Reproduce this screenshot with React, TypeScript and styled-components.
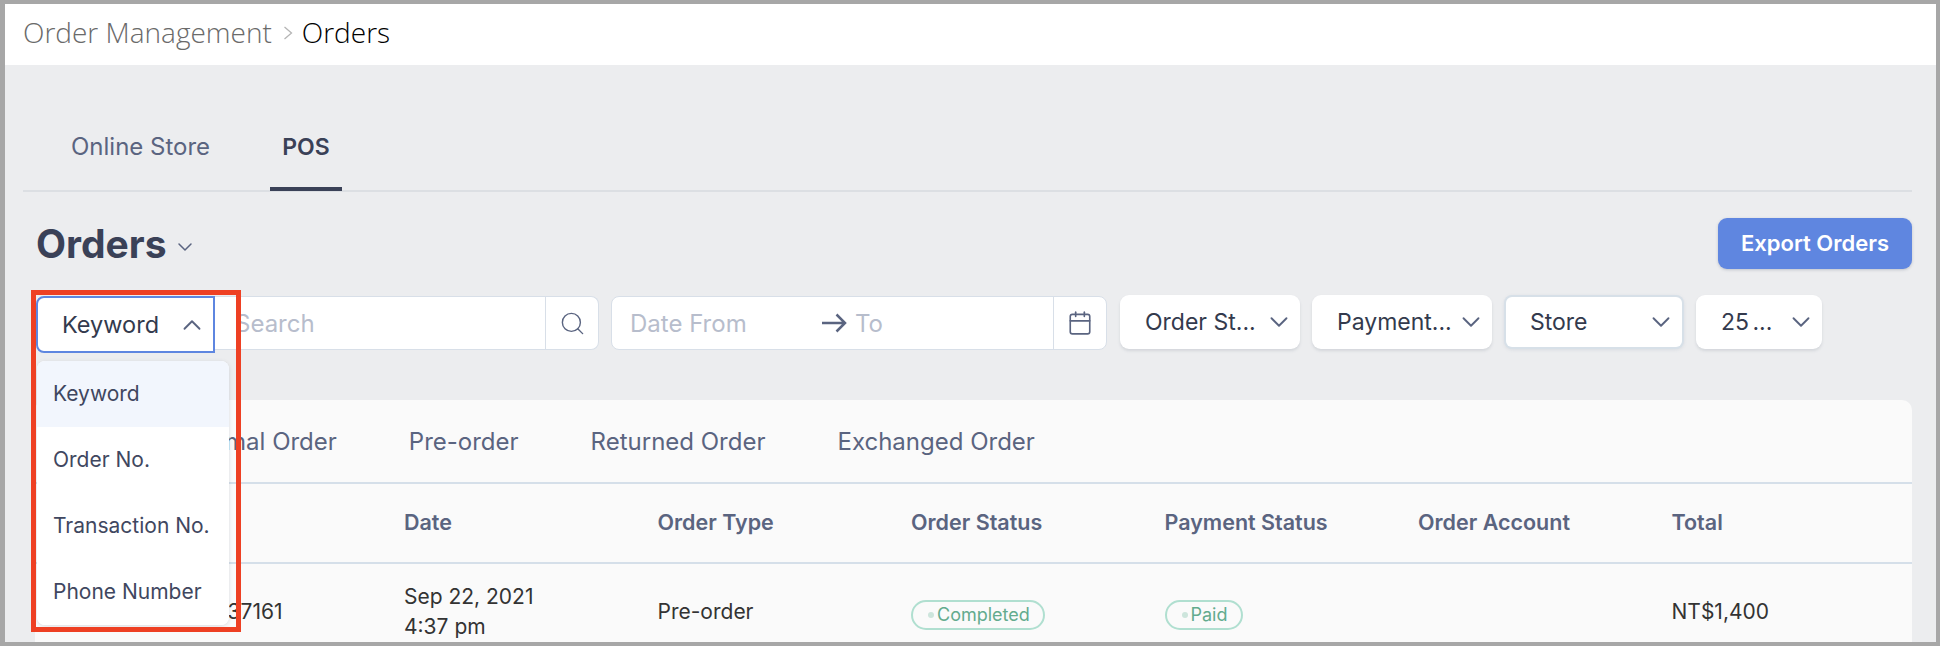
import styled, { createGlobalStyle } from 'styled-components';
import { Calendar, ChevronDown, ChevronUp, Search } from 'lucide-react';

const GlobalStyle = createGlobalStyle`
  * {
    box-sizing: border-box;
  }
  body {
    margin: 0;
    font-family: Inter, "Liberation Sans", sans-serif;
    color: #333a4d;
  }
`

const Frame = styled.div`
  height: 646px;
  border-style: solid;
  border-color: #a7a7a7;
  border-width: 4px 4px 4px 5px;
  background-color: #ecedef;
  overflow: hidden;
`

const Breadcrumb = styled.header`
  display: flex;
  align-items: center;
  height: 61px;
  padding-left: 18px;
  padding-bottom: 6px;
  background-color: #fff;
  font-family: "Open Sans", sans-serif;
  font-size: 28px;
  font-weight: 300;
  color: #000;

  span:first-child {
    color: #6a6a6a;
  }
  svg {
    margin: 2px 9px 0 11px;
    color: #b5b5b5;
  }
`

const Main = styled.main`
  padding: 0 24px 0 18px;
`

const TabsBar = styled.nav`
  display: flex;
  align-items: flex-end;
  gap: 48px;
  height: 127px;
  padding-left: 36px;
  border-bottom: 2px solid #dcdfe3;
`

const Tab = styled.div<{ $active?: boolean }>`
  height: 66px;
  margin-bottom: -1px;
  padding: 0 12px;
  font-size: ${p => (p.$active ? '23px' : '24px')};
  line-height: 44px;
  font-weight: ${p => (p.$active ? 600 : 400)};
  color: ${p => (p.$active ? '#3a4157' : '#5a6480')};
  border-bottom: 4px solid ${p => (p.$active ? '#3a4157' : 'transparent')};
`

const TitleRow = styled.div`
  display: flex;
  align-items: center;
  justify-content: space-between;
  margin-top: 26px;
  height: 51px;
  padding-left: 13px;
`

const Title = styled.h1`
  display: flex;
  align-items: center;
  margin: 0;
  font-size: 39px;
  font-weight: 700;
  color: #3a4157;

  svg {
    margin: 6px 0 0 6px;
    color: #5a6480;
  }
`

const ExportButton = styled.button`
  width: 194px;
  height: 51px;
  padding-bottom: 3px;
  border: none;
  border-radius: 9px;
  background-color: #5f86e0;
  color: #fff;
  font-family: inherit;
  font-size: 22px;
  font-weight: 600;
  box-shadow: 0 1px 3px rgba(60, 70, 100, 0.25);
`

const FilterRow = styled.div`
  position: relative;
  display: flex;
  align-items: flex-start;
  margin-top: 26px;
  height: 54px;
  padding-left: 13px;
`

const KeywordSelect = styled.div`
  display: flex;
  align-items: center;
  justify-content: space-between;
  flex: none;
  position: relative;
  z-index: 1;
  width: 179px;
  height: 57px;
  margin-top: 1px;
  padding: 0 6px 0 24px;
  border: 2px solid #5e86e0;
  border-radius: 8px 0 0 8px;
  background-color: #fff;
  font-size: 23.5px;
  color: #333a4d;

  svg {
    color: #5a6480;
  }
`

const InputGroup = styled.div<{ $width: number; $flat?: boolean }>`
  display: flex;
  flex: none;
  width: ${p => p.$width}px;
  height: 54px;
  margin-top: 1px;
  margin-left: ${p => (p.$flat ? '-2px' : '12px')};
  border: 1px solid #d8dfe8;
  border-left-width: ${p => (p.$flat ? 0 : '1px')};
  border-radius: ${p => (p.$flat ? '0 8px 8px 0' : '8px')};
  background-color: #fff;
`

const TextField = styled.input<{ $pad: number; $width?: number }>`
  flex: ${p => (p.$width ? 'none' : 1)};
  width: ${p => (p.$width ? `${p.$width}px` : 'auto')};
  min-width: 0;
  padding: 0 0 0 ${p => p.$pad}px;
  border: none;
  outline: none;
  background: transparent;
  font-family: inherit;
  font-size: 24px;

  &::placeholder {
    color: #b7bdcc;
    opacity: 1;
  }
`

const IconCell = styled.div`
  display: flex;
  align-items: center;
  justify-content: center;
  flex: none;
  width: 53px;
  border-left: 1px solid #d8dfe8;
  color: #5a6480;
`

const DateArrow = styled.svg`
  flex: none;
  align-self: center;
  width: 26px;
  height: 20px;
  margin-right: 8px;
  color: #5a6480;
`

const BreadcrumbArrow = styled.svg`
  flex: none;
  width: 10px;
  height: 14px;
`

const Select = styled.div<{ $width: number; $focus?: boolean; $tight?: boolean }>`
  display: flex;
  align-items: center;
  justify-content: space-between;
  flex: none;
  width: ${p => p.$width}px;
  height: ${p => (p.$focus ? '50px' : '54px')};
  margin: ${p => (p.$focus ? '2px 14px 0 14px' : '0')};
  padding: 0 6px 0 ${p => (p.$focus ? '24px' : '25px')};
  border-radius: ${p => (p.$focus ? '6px' : '9px')};
  background-color: #fff;
  font-size: 23px;
  word-spacing: ${p => (p.$tight ? '-3px' : 'normal')};
  color: #333a4d;
  box-shadow: ${p =>
    p.$focus ? '0 0 0 2px #d7e0e8, 0 1px 4px 1px rgba(90, 110, 140, 0.2)' : '0 2px 3px rgba(90, 100, 120, 0.16)'};

  svg {
    color: #5a6480;
  }
`

const Spacer = styled.div<{ $width: number }>`
  width: ${p => p.$width}px;
  flex: none;
`

const Menu = styled.ul`
  position: absolute;
  z-index: 3;
  top: 66px;
  left: 14px;
  width: 192px;
  margin: 0;
  padding: 0;
  list-style: none;
  border-radius: 8px;
  background-color: #fff;
  overflow: hidden;
  box-shadow: 0 1px 4px rgba(80, 90, 110, 0.18);
`

const MenuItem = styled.li<{ $active?: boolean }>`
  display: flex;
  align-items: center;
  height: 66px;
  padding-left: 16px;
  padding-bottom: 1px;
  font-size: 21px;
  color: #3f4760;
  background-color: ${p => (p.$active ? '#f2f6fd' : '#fff')};
`

const Highlight = styled.div`
  position: absolute;
  z-index: 4;
  top: -5px;
  left: 8px;
  width: 210px;
  height: 342px;
  border: 5px solid #ee4023;
  pointer-events: none;
`

const Card = styled.section`
  margin: 51px 0 0 12px;
  border-radius: 10px 10px 0 0;
  background-color: #fafafa;
`

const CardTabs = styled.div`
  display: flex;
  align-items: center;
  gap: 72px;
  height: 84px;
  padding-left: 48px;
  border-bottom: 2px solid #d5dfe9;
  font-size: 24px;
  color: #5a6480;
`

const Row = styled.div`
  display: grid;
  grid-template-columns: 369px repeat(5, 253.5px) 1fr;
  align-items: center;

  div:first-child {
    padding-left: 80px;
  }
`

const HeadRow = styled(Row)`
  height: 80px;
  padding-bottom: 2px;
  border-bottom: 2px solid #d5dfe9;
  font-size: 21.5px;
  font-weight: 600;
  color: #5a6480;
`

const BodyRow = styled(Row)`
  height: 96px;
  font-size: 21px;
  line-height: 30px;
  color: #333;
`

const Badge = styled.span<{ $width: number }>`
  display: flex;
  align-items: center;
  width: ${p => p.$width}px;
  height: 30px;
  margin-top: 5px;
  padding-left: 15px;
  border: 2px solid #b0dfd0;
  border-radius: 15px;
  font-size: 18px;
  line-height: 1;
  color: #63ab8e;

  &::before {
    content: '';
    width: 6px;
    height: 6px;
    margin-right: 3px;
    border-radius: 50%;
    background-color: #cde5dc;
  }
`

const Chevron = () => <ChevronDown size={30} strokeWidth={1.5} />;

const App = () => {
  return (
    <Frame>
      <GlobalStyle />
      <Breadcrumb>
        <span>Order Management</span>
        <BreadcrumbArrow viewBox="0 0 10 14" fill="none" stroke="currentColor" strokeWidth="1.3">
          <path d="M1.5 1 L8.5 7 L1.5 13" />
        </BreadcrumbArrow>
        <span>Orders</span>
      </Breadcrumb>
      <Main>
        <TabsBar>
          <Tab>Online Store</Tab>
          <Tab $active>POS</Tab>
        </TabsBar>
        <TitleRow>
          <Title>
            Orders
            <ChevronDown size={24} strokeWidth={1.5} />
          </Title>
          <ExportButton>Export Orders</ExportButton>
        </TitleRow>
        <FilterRow>
          <KeywordSelect>
            Keyword
            <ChevronUp size={30} strokeWidth={1.5} />
          </KeywordSelect>
          <InputGroup $width={386} $flat>
            <TextField $pad={22} placeholder="Search" />
            <IconCell>
              <Search size={27} strokeWidth={1.25} />
            </IconCell>
          </InputGroup>
          <InputGroup $width={496}>
            <TextField $pad={18} $width={209} placeholder="Date From" />
            <DateArrow viewBox="0 0 26 20" fill="none" stroke="currentColor" strokeWidth="2.5">
              <path d="M1 10 H24 M15.5 1.5 L24 10 L15.5 18.5" />
            </DateArrow>
            <TextField $pad={0} placeholder="To" />
            <IconCell>
              <Calendar size={26} strokeWidth={1.5} />
            </IconCell>
          </InputGroup>
          <Spacer $width={13} />
          <Select $width={180}>
            Order St...
            <Chevron />
          </Select>
          <Spacer $width={12} />
          <Select $width={180}>
            Payment...
            <Chevron />
          </Select>
          <Select $width={176} $focus>
            Store
            <Chevron />
          </Select>
          <Select $width={126} $tight>
            25 ...
            <Chevron />
          </Select>
          <Menu>
            <MenuItem $active>Keyword</MenuItem>
            <MenuItem>Order No.</MenuItem>
            <MenuItem>Transaction No.</MenuItem>
            <MenuItem>Phone Number</MenuItem>
          </Menu>
          <Highlight />
        </FilterRow>
        <Card>
          <CardTabs>
            <span>All</span>
            <span>Normal Order</span>
            <span>Pre-order</span>
            <span>Returned Order</span>
            <span>Exchanged Order</span>
          </CardTabs>
          <HeadRow>
            <div>Order No.</div>
            <div>Date</div>
            <div>Order Type</div>
            <div>Order Status</div>
            <div>Payment Status</div>
            <div>Order Account</div>
            <div>Total</div>
          </HeadRow>
          <BodyRow>
            <div>20210922037161</div>
            <div>
              Sep 22, 2021
              <br />
              4:37 pm
            </div>
            <div>Pre-order</div>
            <div>
              <Badge $width={134}>Completed</Badge>
            </div>
            <div>
              <Badge $width={78}>Paid</Badge>
            </div>
            <div />
            <div>NT$1,400</div>
          </BodyRow>
        </Card>
      </Main>
    </Frame>
  );
};

export default App;
